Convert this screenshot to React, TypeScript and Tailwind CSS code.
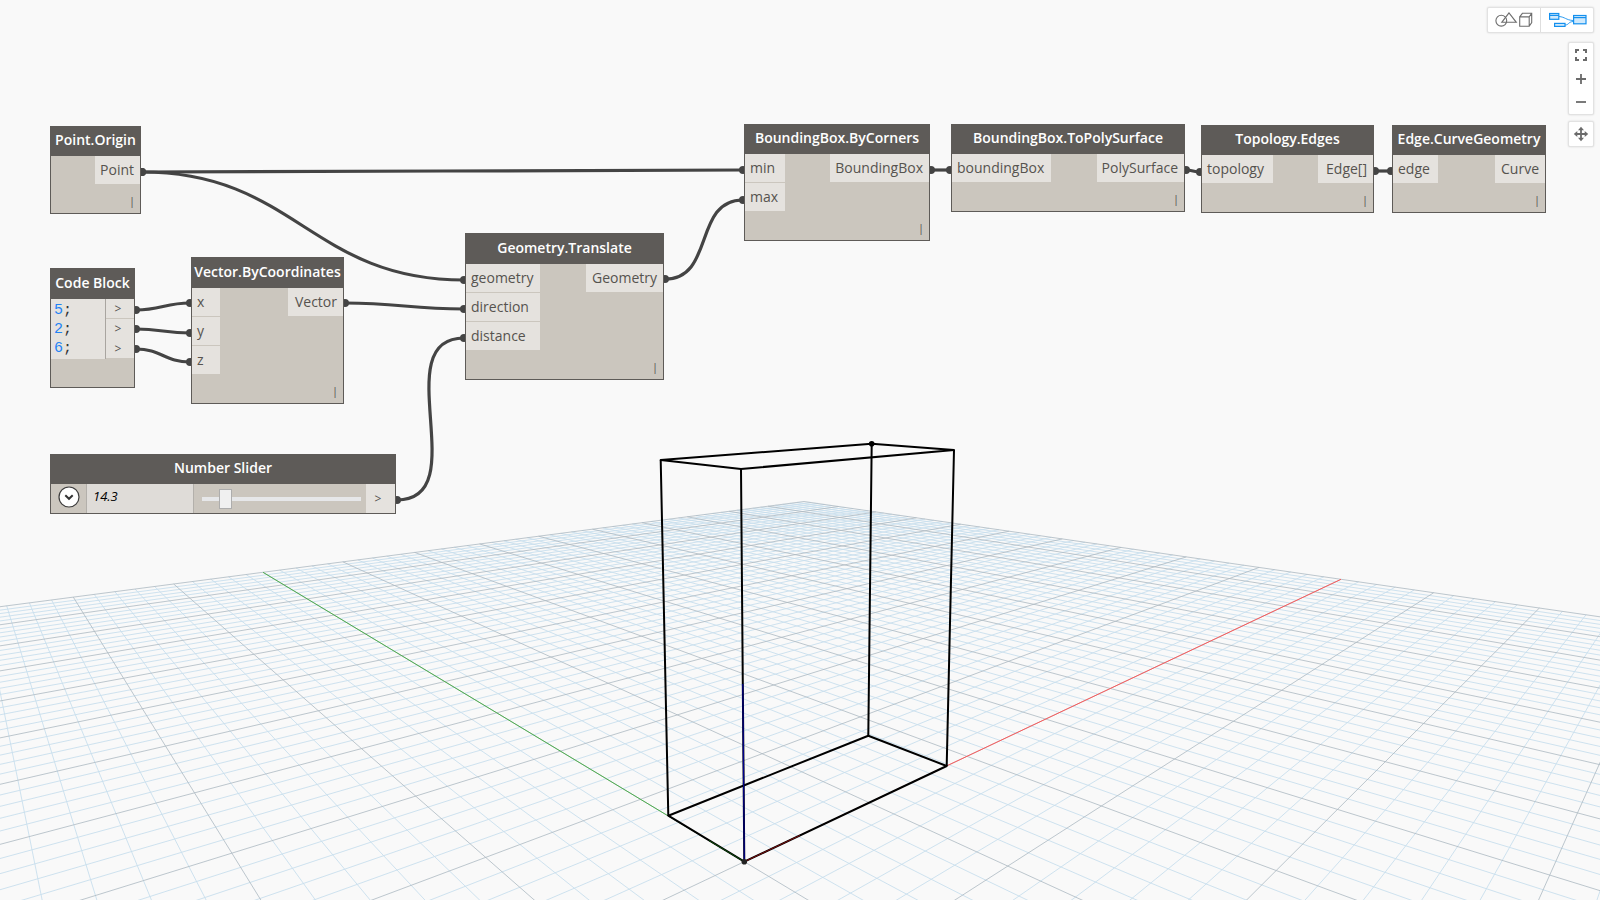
import { useState, type ReactNode } from "react";

/* ---------- 3D background ---------- */

type Pt = [number, number];

const EXTENT = 50;

// Projective map of the ground plane (world units) to the 1600x900 view.
function depth(x: number, y: number) {
  return 1 + (1.3798 * x + 1.4725 * y) / EXTENT;
}

function project(x: number, y: number): Pt {
  const w = depth(x, y);
  return [
    (744.3 + (2447 * x - 94 * y) / EXTENT) / w,
    (861.7 + (516.9 * x + 553.3 * y) / EXTENT) / w,
  ];
}

// Path of a ground line, cut where it passes too close to the camera.
function groundLine(near: Pt, far: Pt) {
  const limit = 0.3;
  const wn = depth(near[0], near[1]);
  const wf = depth(far[0], far[1]);
  if (wf <= limit) return "";
  let start = near;
  if (wn < limit) {
    const t = (limit - wn) / (wf - wn);
    start = [near[0] + (far[0] - near[0]) * t, near[1] + (far[1] - near[1]) * t];
  }
  const a = project(start[0], start[1]);
  const b = project(far[0], far[1]);
  return `M${a[0].toFixed(1)} ${a[1].toFixed(1)}L${b[0].toFixed(1)} ${b[1].toFixed(1)}`;
}

function gridPath(major: boolean) {
  let d = "";
  for (let i = -EXTENT; i <= EXTENT; i++) {
    if ((i % 5 === 0) !== major) continue;
    d += groundLine([i, -EXTENT], [i, EXTENT]);
    d += groundLine([-EXTENT, i], [EXTENT, i]);
  }
  return d;
}

const MINOR = gridPath(false);
const MAJOR = gridPath(true);

function Scene() {
  return (
    <svg
      className="absolute inset-0 h-full w-full"
      viewBox="0 0 1600 900"
      preserveAspectRatio="xMidYMid slice"
      fill="none"
      aria-hidden="true"
    >
      <path d={MINOR} stroke="#c8dfed" strokeWidth="0.9" />
      <path d={MAJOR} stroke="#acb9c1" strokeWidth="0.8" />
      <path d="M744.3 861.7L263 572.3" stroke="#4fae4f" strokeWidth="1" />
      <path d="M744.3 861.7L1341 579.3" stroke="#fb5a5a" strokeWidth="1" />
      <g stroke="#000" strokeWidth="2" strokeLinejoin="round">
        <path d="M744.3 861.7L946.7 766L868.3 735.7L668.3 815.7Z" />
        <path d="M741 469L954 450L871.7 443.7L660.7 460Z" />
        <path d="M668.3 815.7L660.7 460M946.7 766L954 450M868.3 735.7L871.7 443.7M744.3 861.7L741 469" />
      </g>
      <path d="M744.3 861.7L742.8 684" stroke="#000090" strokeWidth="1.2" />
      <path d="M744.3 861.7L709 840.5" stroke="#0a4a0a" strokeWidth="1" />
      <path d="M744.3 861.7L800 835.4" stroke="#7a0d0d" strokeWidth="1" />
      <circle cx="744.3" cy="861.7" r="2.8" fill="#222" />
      <circle cx="871.7" cy="443.7" r="2.8" fill="#000" />
    </svg>
  );
}

/* ---------- wires ---------- */

const WIRES: [number, number, number, number][] = [
  [142, 172, 743, 170],
  [142, 172, 464, 280],
  [136, 310, 190, 303],
  [136, 329, 190, 333],
  [136, 349, 190, 362],
  [345, 303, 464, 309],
  [397, 500, 464, 338],
  [665, 279, 743, 200],
  [931, 170, 950, 170],
  [1186, 170, 1200, 172],
  [1375, 171, 1391, 171],
];

function Wires() {
  return (
    <svg className="absolute top-0 left-0 overflow-visible" width="1" height="1" fill="none" aria-hidden="true">
      {WIRES.map(([x1, y1, x2, y2], i) => {
        const off = 0.45 * Math.hypot(x2 - x1, y2 - y1);
        return (
          <g key={i}>
            <path
              d={`M${x1} ${y1}C${x1 + off} ${y1} ${x2 - off} ${y2} ${x2} ${y2}`}
              stroke="#444444"
              strokeWidth="3.2"
            />
            <circle cx={x1} cy={y1} r="4" fill="#444444" />
            <circle cx={x2} cy={y2} r="4" fill="#444444" />
          </g>
        );
      })}
    </svg>
  );
}

/* ---------- nodes ---------- */

interface NodeFrameProps {
  title: string;
  place: string;
  header?: string;
  children: ReactNode;
}

function NodeFrame({ title, place, header = "h-[29px]", children }: NodeFrameProps) {
  return (
    <section className={`absolute flex flex-col border border-[#5e5b58] bg-[#cbc6be] ${place}`}>
      <h2
        className={`flex shrink-0 items-center justify-center bg-[#5e5b58] pb-[3px] text-[14px] leading-5 font-semibold whitespace-nowrap text-white ${header}`}
      >
        {title}
      </h2>
      {children}
    </section>
  );
}

interface FunctionNodeProps {
  title: string;
  place: string;
  header?: string;
  inputs: string[];
  inputWidth: string;
  output: string;
  outputWidth: string;
}

function FunctionNode({ title, place, header, inputs, inputWidth, output, outputWidth }: FunctionNodeProps) {
  return (
    <NodeFrame title={title} place={place} header={header}>
      <div className="flex items-start justify-between text-[14px] leading-5 text-[#56534f]">
        <ul className={`flex flex-col gap-px ${inputWidth}`}>
          {inputs.map((name) => (
            <li key={name} className="h-7 bg-[#e5e2de] pt-1 pl-[5px]">
              {name}
            </li>
          ))}
        </ul>
        <div className={`h-7 bg-[#e5e2de] pt-1 pr-[6px] text-right ${outputWidth}`}>{output}</div>
      </div>
      <div className="mt-auto flex justify-end pr-2 pb-1 text-[11px] leading-4 text-[#56534f]">
        <span className="w-[3px] overflow-visible">|</span>
      </div>
    </NodeFrame>
  );
}

const NODES: FunctionNodeProps[] = [
  { title: "Point.Origin", place: "left-[50px] top-[126px] w-[91px] h-[88px]", inputs: [], inputWidth: "w-0", output: "Point", outputWidth: "w-[45px]" },
  { title: "Vector.ByCoordinates", place: "left-[191px] top-[257px] w-[153px] h-[147px]", header: "h-[30px]", inputs: ["x", "y", "z"], inputWidth: "w-7", output: "Vector", outputWidth: "w-[55px]" },
  { title: "Geometry.Translate", place: "left-[465px] top-[233px] w-[199px] h-[147px]", header: "h-[30px]", inputs: ["geometry", "direction", "distance"], inputWidth: "w-[74px]", output: "Geometry", outputWidth: "w-[77px]" },
  { title: "BoundingBox.ByCorners", place: "left-[744px] top-[124px] w-[186px] h-[117px]", inputs: ["min", "max"], inputWidth: "w-10", output: "BoundingBox", outputWidth: "w-[99px]" },
  { title: "BoundingBox.ToPolySurface", place: "left-[951px] top-[124px] w-[234px] h-[88px]", inputs: ["boundingBox"], inputWidth: "w-[99px]", output: "PolySurface", outputWidth: "w-[87px]" },
  { title: "Topology.Edges", place: "left-[1201px] top-[125px] w-[173px] h-[88px]", inputs: ["topology"], inputWidth: "w-[71px]", output: "Edge[]", outputWidth: "w-[55px]" },
  { title: "Edge.CurveGeometry", place: "left-[1392px] top-[125px] w-[154px] h-[88px]", inputs: ["edge"], inputWidth: "w-[45px]", output: "Curve", outputWidth: "w-[50px]" },
];

function CodeBlock() {
  return (
    <NodeFrame title="Code Block" header="h-[30px]" place="left-[50px] top-[268px] w-[85px] h-[120px]">
      <div className="flex">
        <div
          role="textbox"
          aria-label="Code"
          aria-multiline="true"
          contentEditable
          suppressContentEditableWarning
          spellCheck={false}
          className="h-[60px] flex-1 border-r border-[#a9a5a0] bg-[#e5e2de] pt-[2px] pl-[3px] font-['Liberation_Mono',monospace] text-[15px] leading-5 text-[#333] outline-none"
        >
          {["5", "2", "6"].map((n) => (
            <div key={n} className="h-[19px]">
              <span className="text-[#1f83f5]">{n}</span>;
            </div>
          ))}
        </div>
        <ul className="w-7 text-center text-[12px] text-[#56534f]">
          <li className="h-[19px] bg-[#e5e2de] pr-1 leading-[19px]">&gt;</li>
          <li className="mt-px h-5 bg-[#e5e2de] pr-1 leading-5">&gt;</li>
          <li className="h-[19px] bg-[#e5e2de] pr-1 leading-[19px]">&gt;</li>
        </ul>
      </div>
    </NodeFrame>
  );
}

function NumberSlider() {
  const [value, setValue] = useState(14.3);
  return (
    <NodeFrame title="Number Slider" place="left-[50px] top-[454px] w-[346px] h-[60px]">
      <div className="flex flex-1 items-stretch">
        <div className="flex w-[35px] justify-center pt-[2px]">
          <button type="button" aria-label="Slider settings" className="h-[22px] w-[22px]">
            <svg viewBox="0 0 22 22" fill="none">
              <circle cx="11" cy="11" r="10" fill="#fff" stroke="#3d3d3d" strokeWidth="1.2" />
              <path d="M7.3 9.3L11 12.8L14.7 9.3" stroke="#333" strokeWidth="2" />
            </svg>
          </button>
        </div>
        <input
          type="text"
          aria-label="Value"
          value={value}
          onChange={(e) => setValue(Number(e.target.value) || 0)}
          className="w-[108px] border-x border-[#b3b0ab] bg-[#dfdcd8] pb-1 pl-[6px] text-[13px] text-black italic outline-none"
        />
        <div className="flex flex-1 items-center pr-[5px] pl-2">
          <input
            type="range"
            aria-label="Number"
            min={0}
            max={120}
            step={0.1}
            value={value}
            onChange={(e) => setValue(Number(e.target.value))}
            className="h-5 w-full min-w-0 appearance-none bg-transparent [&::-webkit-slider-runnable-track]:h-1 [&::-webkit-slider-runnable-track]:bg-[#e6e7e9] [&::-webkit-slider-thumb]:-mt-2 [&::-webkit-slider-thumb]:h-5 [&::-webkit-slider-thumb]:w-[13px] [&::-webkit-slider-thumb]:appearance-none [&::-webkit-slider-thumb]:border [&::-webkit-slider-thumb]:border-[#adadad] [&::-webkit-slider-thumb]:bg-[#f0f0f0]"
          />
        </div>
        <div className="w-[29px] bg-[#e5e2de] pr-[5px] text-center text-[12px] leading-[29px] text-[#56534f]">&gt;</div>
      </div>
    </NodeFrame>
  );
}

/* ---------- view controls ---------- */

const PANEL = "rounded-[2px] border border-[#e2e2e2] bg-white shadow-[0_0_2px_rgba(0,0,0,0.15)]";

function ViewControls() {
  return (
    <nav aria-label="View" className="absolute top-[7px] right-[6px] flex flex-col items-end">
      <div className={`flex h-[26px] w-[107px] ${PANEL}`}>
        <button type="button" aria-label="3D preview" className="flex flex-1 items-center justify-center border-r border-[#dedede]">
          <svg width="38" height="18" viewBox="0 0 38 18" fill="none" stroke="#6e6e6e" strokeWidth="1.1">
            <circle cx="6.3" cy="9.7" r="5.4" />
            <path d="M14 1.9L6.8 11.3H21.3Z" />
            <path d="M24.7 5.9H34.2V15.200H24.7ZM24.7 5.9L27.4 2.3H36.7V11.5L34.2 15.200M34.2 5.9L36.7 2.3" />
          </svg>
        </button>
        <button type="button" aria-label="Graph view" className="flex flex-1 items-center justify-center">
          <svg width="40" height="16" viewBox="0 0 40 16" fill="none" stroke="#1490ee" strokeWidth="1.2">
            <path d="M12 4.500C18 5 19 8 26 8.500M18 13C22 13 21 10 26 9.500" strokeWidth="0.900" />
            <rect x="2.600" y="1.500" width="9.200" height="5.800" fill="#cfe9fc" />
            <path d="M2.600 3.400H11.800" />
            <rect x="7.600" y="11.400" width="10.400" height="3" fill="#cfe9fc" />
            <rect x="26.600" y="3.500" width="12.400" height="8.300" fill="#cfe9fc" />
            <path d="M26.600 5.600H39" />
          </svg>
        </button>
      </div>
      <div className={`mt-[9px] flex h-[73px] w-[26px] flex-col ${PANEL}`}>
        <button type="button" aria-label="Fit to screen" className="flex flex-1 items-center justify-center">
          <svg width="12" height="12" viewBox="0 0 12 12" fill="none" stroke="#6b6b6b" strokeWidth="2">
            <path d="M1 4V1H4M8 1H11V4M11 8V11H8M4 11H1V8" />
          </svg>
        </button>
        <button type="button" aria-label="Zoom in" className="flex flex-1 items-center justify-center">
          <svg width="12" height="12" viewBox="0 0 12 12" stroke="#6b6b6b" strokeWidth="1.800">
            <path d="M1 6H11M6 1V11" />
          </svg>
        </button>
        <button type="button" aria-label="Zoom out" className="flex flex-1 items-center justify-center">
          <svg width="12" height="12" viewBox="0 0 12 12" stroke="#6b6b6b" strokeWidth="1.800">
            <path d="M1 6H11" />
          </svg>
        </button>
      </div>
      <div className={`mt-[6px] flex h-[26px] w-[26px] ${PANEL}`}>
        <button type="button" aria-label="Pan" className="flex flex-1 items-center justify-center">
          <svg width="16" height="16" viewBox="0 0 16 16">
            <path d="M8 3V13M3 8H13" stroke="#6b6b6b" strokeWidth="1.800" />
            <path
              d="M8 0.800L11 4.300H5ZM8 15.200L11 11.700H5ZM0.800 8L4.300 5V11ZM15.200 8L11.700 5V11Z"
              fill="#6b6b6b"
            />
          </svg>
        </button>
      </div>
    </nav>
  );
}

export default function App() {
  return (
    <main className="relative h-screen w-full overflow-hidden bg-[#f9f9f9] font-['Open_Sans','Noto_Sans',sans-serif]">
      <Scene />
      <Wires />
      {NODES.map((n) => (
        <FunctionNode key={n.title} {...n} />
      ))}
      <CodeBlock />
      <NumberSlider />
      <ViewControls />
    </main>
  );
}
